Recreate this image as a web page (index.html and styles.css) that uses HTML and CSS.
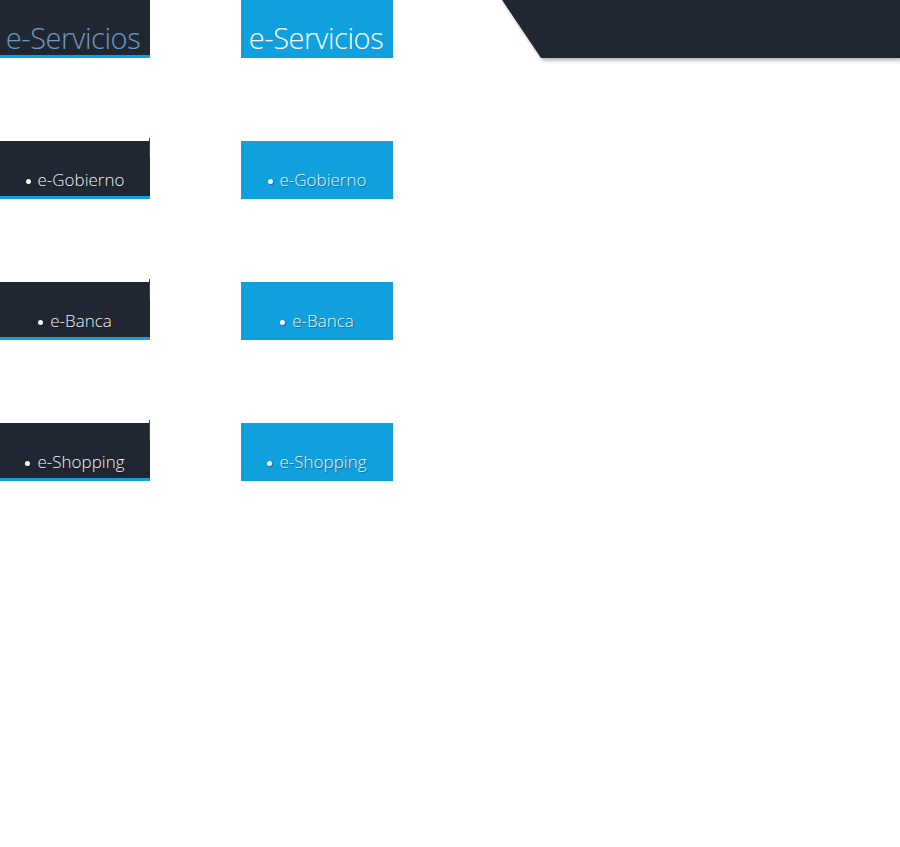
FILE: index.html
```html
<!DOCTYPE html>
<html>
<head>
<meta charset="utf-8">
<link rel="stylesheet" href="styles.css">
</head>
<body>
<div class="page">
  <div class="col col-dark">
    <div class="tile dark title"><span>e-Servicios</span></div>
    <div class="tile dark item"><span class="edge"></span><span class="dot"></span><span>e-Gobierno</span></div>
    <div class="tile dark item"><span class="edge"></span><span class="dot"></span><span>e-Banca</span></div>
    <div class="tile dark item"><span class="edge"></span><span class="dot"></span><span>e-Shopping</span></div>
  </div>
  <div class="col col-blue">
    <div class="tile blue title"><span>e-Servicios</span></div>
    <div class="tile blue item"><span class="dot"></span><span>e-Gobierno</span></div>
    <div class="tile blue item"><span class="dot"></span><span>e-Banca</span></div>
    <div class="tile blue item"><span class="dot"></span><span>e-Shopping</span></div>
  </div>
  <div class="banner-wrap"><div class="banner"></div></div>
</div>
</body>
</html>
```
FILE: styles.css
```css
html, body {
  margin: 0;
  padding: 0;
  background: #ffffff;
}
.page {
  display: flex;
  align-items: flex-start;
  font-family: "Open Sans", "Noto Sans", sans-serif;
}
.col {
  display: flex;
  flex-direction: column;
  gap: 83px;
}
.col-dark {
  width: 150px;
}
.col-blue {
  width: 152px;
  margin-left: 91px;
}
.tile {
  height: 58px;
  box-sizing: border-box;
  display: flex;
  justify-content: center;
  position: relative;
}
.dark {
  background: #202733;
  border-bottom: 3px solid #11a0dc;
}
.blue {
  background: #11a0de;
}
.title {
  font-size: 29px;
  font-weight: 300;
  align-items: flex-start;
  line-height: 36px;
  letter-spacing: -0.4px;
}
.dark.title {
  color: #6e99c0;
  padding-top: 20px;
  padding-right: 4px;
}
.blue.title {
  color: #ffffff;
  padding-top: 20px;
  padding-right: 2px;
}
.item {
  font-size: 17px;
  font-weight: 300;
  color: #f2f4f6;
  line-height: 22px;
  padding-top: 28px;
  align-items: flex-start;
  text-shadow: 1px 1px 1px rgba(0, 0, 0, 0.35);
}
.dot {
  width: 5px;
  height: 5px;
  border-radius: 50%;
  background: #ffffff;
  margin-top: 10px;
  margin-right: 7px;
  box-shadow: 1px 1px 1px rgba(0, 0, 0, 0.3);
}
.edge {
  position: absolute;
  right: 0;
  top: -3px;
  width: 1px;
  height: 20px;
  background: #3a4350;
}
.banner-wrap {
  flex: 1;
  margin-left: 109px;
  filter: drop-shadow(2px 2px 2px rgba(0, 0, 0, 0.35));
}
.banner {
  height: 58px;
  background: #202733;
  clip-path: polygon(0 0, 100% 0, 100% 100%, 39px 100%);
}
```
